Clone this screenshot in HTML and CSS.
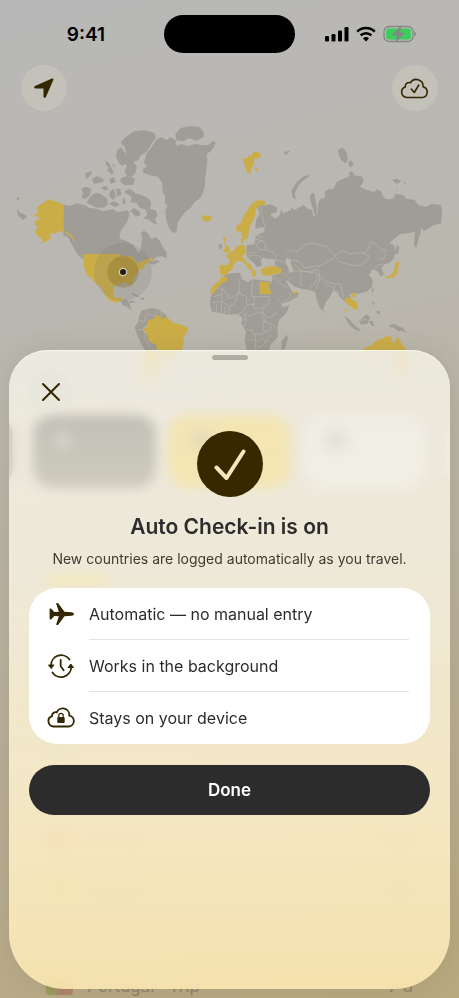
FILE: index.html
```html
<!DOCTYPE html>
<html lang="en">
<head>
  <meta charset="UTF-8" />
  <meta name="viewport" content="width=device-width, initial-scale=1" />
  <title>Auto Check-in</title>
  <link rel="stylesheet" href="styles.css">
</head>
<body>

  <main class="screen">
    <div class="status-bar">
      <span class="time">9:41</span>
      <span class="island"></span>
      <span class="status-icons">
        <svg class="signal" viewBox="0 0 24 16" aria-hidden="true">
          <rect x="0" y="10" width="4" height="5.500" rx="1.3"/>
          <rect x="6.5" y="8" width="4" height="7.500" rx="1.3"/>
          <rect x="13" y="4.500" width="4" height="11" rx="1.3"/>
          <rect x="19.500" y="1" width="4" height="14.500" rx="1.3"/>
        </svg>
        <svg class="wifi" viewBox="0 0 20 16" aria-hidden="true">
          <path d="M1.200 5.600a12.500 12.500 0 0 1 17.600 0M4.600 9.300a7.800 7.800 0 0 1 10.800 0" fill="none" stroke="#000" stroke-width="2.500"/>
          <path d="M10 15.500l-3-3.100a4.300 4.300 0 0 1 6 0z"/>
        </svg>
        <svg class="battery" viewBox="0 0 34 18" aria-hidden="true">
          <rect x="1" y="1.500" width="29" height="15" rx="5" fill="none" stroke="#858782" stroke-width="1.300"/>
          <path d="M31.300 6.500c2.200.6 2.200 4.400 0 5z" fill="#858782"/>
          <rect x="3" y="3.500" width="25" height="11" rx="3" fill="#3cce5c"/>
          <path d="M18 1L9 10h5.500L13 17 22 8h-5.500z" fill="#858782" stroke="#858782" stroke-width=".6"/>
        </svg>
      </span>
    </div>

    <div class="toolbar">
      <button class="round-btn" aria-label="My location">
        <svg viewBox="0 0 24 24" aria-hidden="true">
          <path d="M21.300 3.900L13.900 21c-.5 1.300-2.400 1-2.400-.4V12.500H3.400c-1.400 0-1.700-1.900-.4-2.400L20 2.600c1-.4 1.700.4 1.300 1.300z"/>
        </svg>
      </button>
      <button class="round-btn" aria-label="Synced">
        <svg class="cloud" viewBox="0 0 30 24" aria-hidden="true">
          <path d="M7 21.500a5.400 5.400 0 0 1-1.700-10.500 3.800 3.800 0 0 1 5-4.200 6.900 6.900 0 0 1 12.800 4 5.500 5.500 0 0 1-.3 10.700z"/>
          <path d="M11.300 13l3 3.500 4.500-7.500"/>
        </svg>
      </button>
    </div>

    <svg class="map" viewBox="0 0 1377 870" role="img" aria-label="Visited countries">
      <!-- north america and greenland -->
      <g class="land">
        <path d="M190 284l20 4 20-8 24 6 14 8 22 2 20 8 28-6 16 8 18-4 16 14-8 22-18 24-4 24 24 8 18 12 14 22 6-2 4-22 2-26-4-10 10-6 14 10 8 16 14-8 12 14 12 22 10 16-8 6-24 2-16 14 18-4 8 6-22 8-10-4-10-10-14 16-20 4-18-14-30-10H246l-14-14-16-28-12-22-14-6z"/>
        <path d="M362 98l14-16 26-18 34-3 28 8 4 14-14 20-14 22-20 12-4 14-16 4 10 14-2 16-12 16-14-2-8-14 6-18-12-16 12-18-6-22z"/>
        <path d="M352 120l12-8 14 20-2 30-10 6-10-10-8-20z"/>
        <path d="M372 246l14-10 12 6 8 8 16 4 22 10 10 16-4 16 18 6 4 16-8 10 8 14-12-2-16-12-14-2 12-12-6-16-16-4-10-14-18-4 2-16z"/>
        <path d="M268 264l12-12 16-4 14 10 10 6 4 18-10 10-20 2-16-6-18-10zM244 236l14-6 16 6-4 20-16 12-10-6 6-12zM256 190l20-8-4 14-14 12zM276 206l14-8 20 8v10l-28 6zM316 150l14 12 2 14-14-10zM320 178l14-6 8 16-8 4zM336 160l10 8-4 4zM328 206l14-4 6 14-16 6zM362 206l18-8 26 8-6 18-26 2-12-10zM330 244l12-8 6 26-8 8-12-10zM348 236l14 2 2 16-12 6zM304 232l14-4 8 10-14 4zM326 280l18-6 16 10-14 8zM366 268l8-4 4 16-8 2zM374 300l12 4 4 10-14-4z"/>
        <path d="M390 304l12-10 16 10 4 12-14 4z"/>
        <path d="M526 72l16-18 30-6 28 4 12 16-2 14-20 10-24-8-14 10-22-2z"/>
        <path d="M440 130l14-18 16-24 14-6 16 8 12-8 14 8 4 18 14-6 20 6 20-6 24 4 18-2 14-12 8 6-14 24-14 10 2 20-2 20-4 30-2 30-8 24-10 12-14 10-10 16-14 10-10 12-14 20-4 26-6 8-10-6-10-16-6-22-2-22 6-16-8-10 2-18-8-16-2-26-12-18-24-4-20-8-2-10 12-8-8-12z"/>
        <path d="M50 296l12 14 10 2 10 8-14 10-14-14zM50 262h8v8h-6zM450 436l16-8 6 10-12 10zM484 434l12-4 6 14-14-4zM196 360l10 6-6 4zM238 426l12 6-2 4zM386 574l16-2 4 4-16 4zM362 574l16-8 10 14 6 22-12-12-14-4zM396 548l22 10-4 4-18-8zM422 562l12 2-2 6-12-2z"/>
        <path d="M404 652l10-16 4-20 8-16 14-2 16-4 18 4 12 8 14 10 2 12-24 4-28-2-8 16-12 8 2 14 22 6 10 20 12 14v22h-34l-16-24-12-26z"/>
        <path d="M656 406l8-6 4 14-10 4z"/>
      </g>

      <g class="land" transform="translate(660 0)">
        <!-- europe and asia -->
        <path d="M134 288L150 282 170 292 172 306 150 312 164 326 178 318 184 298 190 310 212 300 216 290 222 300 240 292 248 284 264 296 276 300 280 318 286 318 270 270 272 252 282 248 286 268 292 300 288 318 294 306 294 282 300 268 316 262 314 244 330 236 340 238 350 216 366 208 396 196 424 198 432 212 420 230 440 240 462 246 470 238 484 244 490 262 500 268 520 266 526 252 548 254 560 266 584 270 596 286 620 290 634 282 662 284 666 300 664 340 640 346 612 364 600 350 590 362 566 370 540 372 508 398 522 406 528 425 520 448 506 460 494 462 484 476 492 492 482 500 474 486 466 480 454 480 452 488 446 494 458 510 456 530 440 545 410 552 396 550 388 556 398 574 384 580 372 572 360 562 352 545 340 542 330 560 318 575 308 602 298 592 288 560 286 545 270 540 250 538 224 530 206 514 196 510 210 534 218 546 236 548 232 560 208 574 184 582 170 560 152 526 156 508 158 496 182 490 184 476 160 466 168 450 150 446 140 448 130 442 122 450 126 466 112 472 102 460 80 440 80 404 104 400 106 380 120 370 134 366 130 350 106 356 108 330 120 312 112 290 122 280z"/>
        <path d="M214 244l14-26 20-18 22-6-4 6-18 12-14 18-10 20 4 18-10-6zM354 120l14-8 12 16 4 22-8 10-12-10-8-16zM384 158l8-8 10 12-12 12zM386 190l10-8 8 14-14 4zM516 210l16-4 12 8-14 8zM548 216l10 2-4 4zM528 236l6 2-2 4zM192 126l8-2 10-2-6 8-8 6zM584 352l16-6 4 12-6 22-10 34-6-8 2-26zM530 404l8 8-4 22-8-4z"/>
        <path d="M372 618l14 8 16 18 20 16-10 2-20-12zM418 632l12-10 10-10 10 10-8 20-20 2zM446 634l12-2 4 18-8-4zM508 644l16-2 14 8 12 4 8 14-14-6-10 2-10-10-14-2zM456 572l8 6-4 10zM470 602l10 2-2 10-8-6zM310 596l6 10-4 4zM186 692l14-18 4 10-10 34h-10zM478 482l8-4-4 22zM454 542l4-8 4 4-4 10z"/>
        <!-- africa -->
        <path d="M-28 560L-16 534 2 514 16 494 34 490 60 488 66 508 84 516 98 508 150 514 156 530 176 572 190 592 208 586 200 608 178 630 172 650 174 680 152 704 148 720 80 720 74 690 78 666 64 640 66 622 54 612 20 614 2 608 -24 606 -30 584z"/>
      </g>

      <path class="sea" transform="translate(660 0)" d="M198 444l16 6-2 12 8 14 0 10-12 2-4-16-8-14zM134 454l12-4 10 8 14 8-10 4-24 0z"/>

      <!-- borders -->
      <g class="borders" transform="translate(660 0)">
        <path d="M122 284l4 30 10 40M82 404l26-2 20-10M108 402l8 16 24 2 24 10M80 430l30-4M80 440l24-6 20 8M104 376l24 4M104 388l24 4M130 392l8 16-4 12M166 432l2 18 24 6M196 434l14-12 24 2 18-20 24-6 26 8 22 4 10 18 12 10 24-18 18 12 34-4 16 0 8-16 6-14 14 2 16 18 18 4-8 24-16 2M344 436l10 18 22 6 24 8 24-4 18-16 6-10-24-10M216 452l20 2 18 20 24-4 20-2 30-16 18-10M222 462l26 22 26 4 16-8M220 482l22 2 2 46M242 484l30 0 22 8-8 26-20 20M278 478l18 2 4 26-14 34M296 500l20 14 28 8 16-2 6 20 4 24M310 520l30 14M344 526l-4 18M162 498l18 22 24 16M150 516l14-14M190 488l20 20M184 580l30-20-6-14M458 478l20-14 14 0"/>
        <path d="M-14 534l20 0 24 32 28-18 0-30-8-14M6 534l0 40-28 4M6 574l20 14 16-2 14-38 24 12 0 24-10 20-16 8M98 510l-4 50M94 560h56M80 584l24-2M104 560l-4 32 10 10M150 562l-4 20-18 12-24 0M128 594l-2 16 20 14 24-16M76 606l14 14 22-14 20 4M-18 560l22-8M-10 582l0 26M4 580l0 30M16 588l-2 24M30 588l-6 26M72 610l4 14-12 10M78 626l-2 20-12 4M78 660h18l4 14 16-2M132 612l0 20-4 24 8 10-20 8M130 632l20 8 20 12M136 664l16-4 2-12M92 660l14 18v12h-30M106 690l0 28M106 696l18-14 14 14-14 14-14 0M138 696l14-20M420 632l20-4"/>
      </g>
      <g class="borders">
        <path d="M410 628l22 8 8-24M436 598l8 14 24 8 2-20M414 660l22-2M444 668l-12 12 18 30M486 604l-4 20"/>
      </g>

      <!-- visited -->
      <g class="visited">
        <path d="M190 284v78l12 4 14 10 10 22-16-20-16-12-18-2-12 8-8-4-8 8 6 8-14 10-16 6 4-10-14-12-8-8 2-14 10-4-12-6-2-12 14-6-4-8-12-2 2-6 12-2-6-10 2-10 16-10 18-12 20 6z"/>
        <path d="M250 432h108l14 8 22-2 18 22 22-10 14-2 8-8 2 6-8 10-14 6-8 14-10 4-12 14-8 14-2 26-8-14-16-4-14 6-16 6-2 22 4 14 18-2 4 8-16 8-20-6-14-14-12-24-18-14-10-14-16-12-8-22z"/>
        <path d="M430 658l14-10-2-18 16-2 10-10 12-2 6 12 14-8 10 10 14 10 20 4 20 10-2 12-10 14-2 20-4 18-22 14-6 10h-20l-10-14-16-8-6-18-18-6-6-20z"/>
        <path d="M606 320l10-4 18 2 2 10-14 8-14-6zM434 720h34l14 20-8 40-18 6-8 34-16-8 2-50z"/>
      </g>
      <g class="visited" transform="translate(660 0)">
        <path d="M66 146l14-2 8-10 14 14 0 16-8 10-4 22-10-12-6-20zM94 134l6-8 16 0 8 12-14 10-14-4zM104 176l6-4 4 6-6 8z"/>
        <path d="M48 350L64 336 72 316 82 300 96 280 112 270 134 272 138 284 120 286 108 298 104 322 92 344 86 364 84 382 74 390 66 380 62 364 50 366z"/>
        <path d="M8 376l10 10-4 12 12 12 6 16-16 2-8-4 8-12zM26 430l14-8 10-12 12-6 8 0 8 10 0 16-12 8 6 10 10 10 12 12 4 14-14-10-10-14-10-6-12-2-8 6-8 20-12 10-6 8-14 0-4-6 0-24 26-2 2-18-10-8zM62 386l8-2 2 14-8 2z"/>
        <path d="M-30 544l8-16 18-14 8-14 18 0 0 12-16 8-18 18-12 18zM84 460l10 6 2 12 12 6-2 18-8-4-4-16-12-10zM122 478l18-8 16-2 26 6 2 14-18 4-22 6-18-4zM118 516l30 0-2 10 8 26h-36z"/>
        <path d="M526 460l8-6 6 4-6 14-4 22-10 8-20 4-4-4 18-8 8-12 2-12zM374 566l10-6 12 8 14 8 4 18-10 6-8-8-10-6-10-10zM394 550l14-2 0 12-10 2zM216 546l16-2-10 10zM376 598l6 0-2 8z"/>
        <path d="M430 716l24-10 20-18 12 0 12-10 18 2-2 12 10 6 8-20 10 18 16 22v8h-128zM520 744l18-8 26 0 0 30-14 22-20-10z"/>
      </g>

      <!-- current location -->
      <circle class="pulse" cx="369" cy="486" r="87"/>
      <circle class="pulse inner" cx="369" cy="486" r="47"/>
      <circle class="pin" cx="369" cy="486" r="11"/>
    </svg>

    <div class="cards">
      <div class="card dark side"></div>
      <div class="card dark"><i></i></div>
      <div class="card yellow"><i></i></div>
      <div class="card light"><i></i></div>
      <div class="card light side"></div>
    </div>

    <div class="trips">
      <div class="progress"></div>
      <div class="trip"><i class="flag"></i><i class="line short"></i></div>
      <div class="trip"></div>
      <div class="trip"><i class="flag red"></i><i class="line"></i><i class="line short"></i></div>
      <div class="trip"><i class="flag green"></i><i class="line"></i><i class="line short"></i></div>
      <div class="trip"></div>
      <div class="trip"><i class="flag portugal"></i><span>Portugal · Trip</span><span class="days">7 d</span></div>
    </div>
  </main>

  <section class="sheet" role="dialog" aria-labelledby="sheet-title">
    <span class="grabber"></span>
    <button class="close" aria-label="Close">
      <svg viewBox="0 0 20 20" aria-hidden="true"><path d="M2 2l16 16M18 2L2 18"/></svg>
    </button>

    <svg class="badge" viewBox="0 0 66 66" aria-hidden="true">
      <circle cx="33" cy="33" r="33"/>
      <path d="M19.500 36.500L29.500 47 46.500 20.500"/>
    </svg>

    <h1 id="sheet-title">Auto Check-in is on</h1>
    <p>New countries are logged automatically as you travel.</p>

    <ul class="features">
      <li>
        <svg viewBox="0 0 28 28" aria-hidden="true">
          <path d="M24.500 12.200c1.500.2 2.500.9 2.500 1.800s-1 1.600-2.500 1.800l-7 .4-6.300 8.500c-.5.600-2.300.4-2-.4l2.700-8L7.300 16l-3 3.300c-.4.300-1.800.3-1.700-.3V9c-.1-.6 1.300-.6 1.700-.3l3 3.300 4.600-.3-2.700-8c-.3-.8 1.500-1 2-.4l6.300 8.500z" fill="#332700"/>
        </svg>
        <span>Automatic — no manual entry</span>
      </li>
      <li>
        <svg viewBox="0 0 28 28" aria-hidden="true">
          <path d="M4 13.500A10.200 10.200 0 0 1 22.500 7.500M24.200 14.500A10.200 10.200 0 0 1 5.500 20.500M13.700 8v6.300l3 4" class="stroke"/>
          <path d="M1.500 13h5.500L4.200 16.600zM21 15.500h5.500L23.800 12z" fill="#332700" stroke="#332700" stroke-linejoin="round"/>
        </svg>
        <span>Works in the background</span>
      </li>
      <li>
        <svg viewBox="0 0 28 28" aria-hidden="true">
          <path d="M6.500 22.500a5.300 5.300 0 0 1-1.500-10.300 3.700 3.700 0 0 1 4.700-3.900 6.600 6.600 0 0 1 12.600 3.300 5.500 5.500 0 0 1-.5 10.900z" class="stroke"/>
          <rect x="10.300" y="13" width="7.400" height="6" rx="1" fill="#332700"/>
          <path d="M11.800 13v-1.500a2.200 2.200 0 0 1 4.400 0V13" fill="none" stroke="#332700" stroke-width="1.200"/>
        </svg>
        <span>Stays on your device</span>
      </li>
    </ul>

    <button class="done">Done</button>
  </section>

</body>
</html>
```
FILE: styles.css
```css
* {
  box-sizing: border-box;
}

body {
  margin: 0;
  font-family: Inter, "Liberation Sans", sans-serif;
  color: #2c2c2c;
}

button {
  border: none;
  padding: 0;
  font-family: inherit;
  cursor: pointer;
}

.screen {
  height: 100vh;
  overflow: hidden;
  background: linear-gradient(165deg, #b8b8b8 0%, #bab7ae 35%, #b8ad96 70%, #b8a87e 100%);
}

/* status bar */
.status-bar {
  display: grid;
  grid-template-columns: 1fr 131px 1fr;
  align-items: center;
  height: 65px;
  padding-top: 3px;
}

.time {
  padding-left: 8px;
  text-align: center;
  font-size: 19px;
  font-weight: 600;
  color: #000;
}

.island {
  height: 38px;
  border-radius: 19px;
  background: #000;
}

.status-icons {
  display: flex;
  align-items: center;
  justify-content: center;
  gap: 7px;
  padding-right: 12px;
}

.status-icons svg {
  flex: none;
}

.signal {
  width: 24px;
  height: 16px;
}

.wifi {
  width: 20px;
  height: 16px;
}

.battery {
  width: 34px;
  height: 18px;
}

/* toolbar */
.toolbar {
  display: flex;
  justify-content: space-between;
  padding: 0 21px;
  height: 45px;
}

.round-btn {
  display: flex;
  align-items: center;
  justify-content: center;
  width: 46px;
  height: 46px;
  border-radius: 50%;
  background: rgba(208, 206, 190, 0.45);
}

.round-btn svg {
  width: 24px;
  height: 24px;
  fill: #332700;
}

.round-btn .cloud {
  width: 30px;
  fill: none;
  stroke: #332700;
  stroke-width: 1.6;
  stroke-linecap: round;
  stroke-linejoin: round;
}

/* map */
.map {
  display: block;
  width: 100%;
}

.land {
  fill: #9f9d95;
}

.sea {
  fill: #b9b6ad;
}

.borders {
  fill: none;
  stroke: #b9b6ad;
  stroke-width: 2;
}

.visited {
  fill: #cbad48;
}

.pulse {
  fill: rgba(120, 122, 112, 0.2);
}

.pulse.inner {
  fill: rgba(120, 95, 20, 0.28);
}

.pin {
  fill: #231d17;
  stroke: #d5cdb5;
  stroke-width: 4;
}

/* cards and trips under the sheet */
.cards {
  display: flex;
  justify-content: center;
  gap: 12px;
  margin: 15px 9px 0;
  overflow: hidden;
}

.card {
  flex: 0 0 123px;
  height: 73px;
  padding: 16px 20px;
  border-radius: 20px;
}

.card.side {
  margin: 0 8px;
}

.card.dark {
  background: linear-gradient(#0c0c0c, #34332c);
}

.card.yellow {
  background: #d8a900;
}

.card.light {
  background: #cbcbcf;
}

.card i {
  display: block;
  width: 26px;
  height: 18px;
  border-radius: 9px;
  background: rgba(60, 60, 60, 0.4);
}

.card.dark i {
  width: 18px;
  background: rgba(160, 160, 160, 0.5);
}

.trips {
  padding: 88px 46px 0;
}

.progress {
  width: 62px;
  height: 8px;
  margin-bottom: 132px;
  border-radius: 4px;
  background: #d8b400;
}

.trip {
  display: flex;
  align-items: center;
  gap: 14px;
  height: 49px;
  font-size: 17px;
  color: #8f846c;
}

.flag {
  width: 27px;
  height: 18px;
  border-radius: 4px;
  background: #a2a096;
}

.flag.red {
  background: #c48a60;
}

.flag.green {
  background: #b0ad5c;
}

.flag.portugal {
  background: linear-gradient(90deg, #9a9a60 40%, #b08468 40%);
}

.line {
  width: 56px;
  height: 10px;
  background: #a99f80;
}

.line.short {
  width: 28px;
  margin-left: auto;
}

.days {
  margin-left: auto;
}

/* sheet */
.sheet {
  position: fixed;
  left: 9px;
  right: 9px;
  bottom: 9px;
  display: flex;
  flex-direction: column;
  align-items: center;
  padding: 5px 20px 174px;
  border-radius: 38px 38px 56px 56px;
  background: linear-gradient(rgba(252, 249, 238, 0.75), rgba(253, 248, 232, 0.78) 35%, rgba(255, 242, 202, 0.84) 75%, rgba(255, 236, 182, 0.85));
  backdrop-filter: blur(6px);
  box-shadow: inset 0 1px 1px rgba(255, 255, 255, 0.6), 0 0 24px rgba(80, 70, 40, 0.12);
}

.grabber {
  width: 36px;
  height: 5px;
  border-radius: 3px;
  background: #b0ada3;
}

.close {
  display: flex;
  align-items: center;
  justify-content: center;
  align-self: flex-start;
  width: 44px;
  height: 44px;
  margin-top: 10px;
  border-radius: 50%;
  background: rgba(230, 228, 220, 0.3);
}

.close svg {
  width: 20px;
  height: 20px;
  fill: none;
  stroke: #332700;
  stroke-width: 2;
  stroke-linecap: round;
}

.badge {
  width: 66px;
  height: 66px;
  margin-top: 17px;
  fill: #362900;
}

.badge path {
  fill: none;
  stroke: #f3e7bb;
  stroke-width: 4;
  stroke-linecap: round;
  stroke-linejoin: round;
}

.sheet h1 {
  margin: 16px 0 0;
  font-size: 21px;
  line-height: 28px;
  font-weight: 600;
}

.sheet p {
  margin: 8px 0 0;
  font-size: 14px;
  line-height: 20px;
  color: #3f3b32;
}

.features {
  align-self: stretch;
  margin: 19px 0 0;
  padding: 0 21px 0 18px;
  list-style: none;
  border-radius: 28px;
  background: #fff;
}

.features li {
  display: flex;
  align-items: center;
  gap: 14px;
  height: 52px;
  font-size: 16px;
}

.features svg {
  flex: none;
  width: 28px;
  height: 28px;
}

.features span {
  flex: 1;
  padding-top: 2px;
  line-height: 49px;
  border-bottom: 1px solid #e4e4e4;
}

.features li:last-child span {
  border-bottom-color: transparent;
}

.stroke {
  fill: none;
  stroke: #332700;
  stroke-width: 1.8;
  stroke-linecap: round;
}

.done {
  align-self: stretch;
  height: 50px;
  margin-top: 21px;
  border-radius: 25px;
  background: #2c2c2c;
  color: #fff;
  font-size: 17px;
  font-weight: 600;
}
```
